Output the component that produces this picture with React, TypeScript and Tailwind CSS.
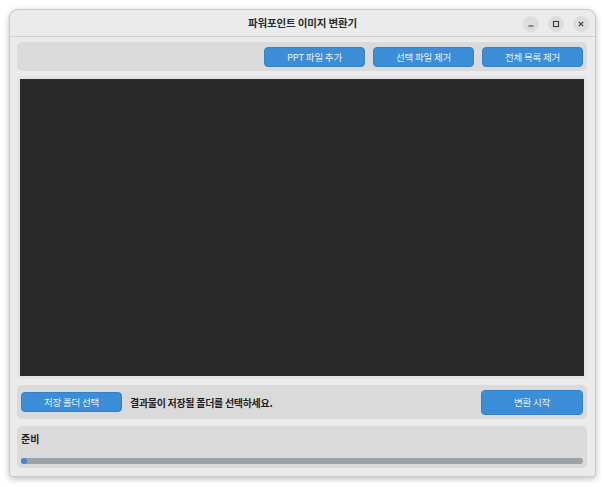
import React from 'react';

const font = { fontFamily: '"Noto Sans CJK KR", "Noto Sans", sans-serif' };

function WinButton({ kind }: { kind: 'min' | 'max' | 'close' }) {
  return (
    <div className="w-[16px] h-[16px] rounded-full bg-[#dddddd] flex items-center justify-center">
      <svg width="10" height="10" viewBox="0 0 10 10" fill="none" stroke="#3a3a3a" strokeWidth="1.1">
        {kind === 'min' && <path d="M2.5 7h5" />}
        {kind === 'max' && <rect x="2.5" y="2.5" width="5" height="5" />}
        {kind === 'close' && <path d="M2.8 2.8l4.4 4.4M7.2 2.8l-4.4 4.4" />}
      </svg>
    </div>
  );
}

function BlueButton({ label, tall }: { label: string; tall?: boolean }) {
  return (
    <button
      className={`${tall ? 'h-[25px] w-[102px]' : 'h-[20px] w-[101px]'} rounded-[4px] bg-[#3a8dd6] border border-[#3282c8] text-[#e9f1fa] text-[9.5px] tracking-[-0.2px] flex items-center justify-center`}
    >
      {label}
    </button>
  );
}

export default function App() {
  return (
    <div className="w-[605px] h-[487px] bg-white overflow-hidden" style={font}>
      <div className="ml-[9px] mt-[9px] w-[587px] h-[468px] rounded-t-[9px] rounded-b-[3px] border border-[#c9c9c9] bg-[#ebebeb] shadow-[0_2px_6px_rgba(0,0,0,0.25)] flex flex-col overflow-hidden">
        {/* title bar */}
        <div className="h-[27px] shrink-0 border-b border-[#d2d2d2] grid grid-cols-[1fr_auto_1fr] items-center">
          <div />
          <div className="text-[10.5px] font-bold text-[#2b2b2b] tracking-[-0.15px]">파워포인트 이미지 변환기</div>
          <div className="flex justify-end items-center gap-[9px] pr-[6px] pt-[1px]">
            <WinButton kind="min" />
            <WinButton kind="max" />
            <WinButton kind="close" />
          </div>
        </div>

        {/* body */}
        <div className="flex-1 flex flex-col pl-[7px] pr-[8px] pt-[5px] pb-[8px]">
          <div className="h-[29px] shrink-0 rounded-[5px] bg-[#dadada] flex items-center justify-end gap-[8px] pr-[4px] pt-[1px]">
            <BlueButton label="PPT 파일 추가" />
            <BlueButton label="선택 파일 제거" />
            <BlueButton label="전체 목록 제거" />
          </div>

          <div className="mt-[5px] h-[303px] shrink-0 rounded-[4px] bg-[#e3e3e3] p-[3px]">
            <div className="w-full h-full bg-[#282828]" />
          </div>

          <div className="mt-[6px] h-[34px] shrink-0 rounded-[5px] bg-[#dadada] flex items-center pl-[4px] pr-[4px]">
            <BlueButton label="저장 폴더 선택" />
            <span className="ml-[8px] text-[10px] font-bold text-[#1f1f1f] tracking-[-0.3px]">
              결과물이 저장될 폴더를 선택하세요.
            </span>
            <div className="flex-1" />
            <BlueButton label="변환 시작" tall />
          </div>

          <div className="mt-[7px] flex-1 rounded-[5px] bg-[#dadada] flex flex-col px-[4px] pt-[6px]">
            <div className="text-[10px] font-bold text-[#1f1f1f] leading-[14px]">준비</div>
            <div className="mt-[12px] h-[6px] rounded-full bg-[#9ba1a7] flex">
              <div className="w-[6px] h-[6px] rounded-full bg-[#3a8ad6]" />
            </div>
          </div>
        </div>
      </div>
    </div>
  );
}
